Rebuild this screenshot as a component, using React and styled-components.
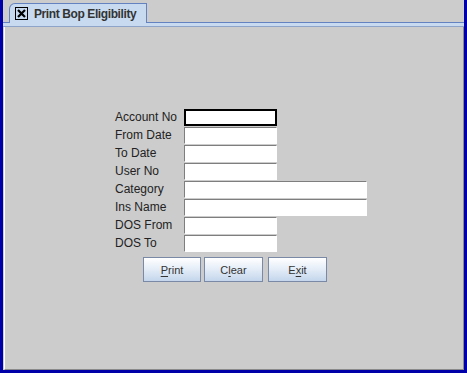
import React from 'react';
import styled, { createGlobalStyle } from 'styled-components';

const GlobalStyle = createGlobalStyle`
  html, body {
    margin: 0;
    padding: 0;
    background: #cccccc;
  }
  body {
    font-family: "Liberation Sans", Arial, sans-serif;
    font-size: 12px;
    color: #222;
  }
`;

const Frame = styled.div`
  width: 467px;
  height: 373px;
  box-sizing: border-box;
  border: 3px solid #0000a8;
  border-top: none;
  background: #cccccc;
  display: flex;
  flex-direction: column;
`;

const TabStrip = styled.div`
  display: flex;
  align-items: flex-end;
  height: 23px;
  flex-shrink: 0;
`;

const StripEdge = styled.div`
  width: ${({ w }) => (w ? `${w}px` : 'auto')};
  flex: ${({ grow }) => (grow ? 1 : 'none')};
  height: 0;
  border-bottom: 1px solid #6382bf;
`;

const Tab = styled.div`
  height: 20px;
  box-sizing: border-box;
  display: flex;
  align-items: center;
  gap: 6px;
  padding: 0 10px 0 5px;
  background: #c8daf0;
  border: 1px solid #6382bf;
  border-bottom: none;
  border-top-left-radius: 6px;
`;

const CloseBox = styled.span`
  width: 13px;
  height: 13px;
  box-sizing: border-box;
  display: inline-flex;
  align-items: center;
  justify-content: center;
  border: 1px solid #000;
`;

const TabTitle = styled.span`
  font-weight: bold;
  font-size: 12px;
  letter-spacing: -0.4px;
  color: #333;
`;

const TabBand = styled.div`
  height: 3px;
  background: #c8daf0;
  border-bottom: 1px solid #8ea4c8;
  flex-shrink: 0;
`;

const Panel = styled.div`
  flex: 1;
  border-left: 1px solid #ffffff;
  border-right: 1px solid #8a8a8a;
  border-bottom: 1px solid #8a8a8a;
  margin: 0 0 0 1px;
  padding: 82px 0 0 110px;
  display: flex;
  flex-direction: column;
`;

const Form = styled.div`
  display: grid;
  grid-template-columns: 69px auto;
  row-gap: 1px;
  justify-items: start;
`;

const Label = styled.label`
  font-size: 12px;
  line-height: 17px;
  color: #222;
  white-space: nowrap;
`;

const Field = styled.div`
  width: ${({ wide }) => (wide ? 183 : 93)}px;
  height: 17px;
  box-sizing: border-box;
  background: #fff;
  border-top: 1px solid ${({ focused }) => (focused ? '#000' : '#7e7e7e')};
  border-left: 1px solid ${({ focused }) => (focused ? '#000' : '#7e7e7e')};
  border-right: 1px solid ${({ focused }) => (focused ? '#000' : '#fff')};
  border-bottom: 1px solid ${({ focused }) => (focused ? '#000' : '#fff')};
  outline: ${({ focused }) => (focused ? '1px solid #000' : 'none')};
  outline-offset: -2px;
`;

const ButtonRow = styled.div`
  display: flex;
  margin: 5px 0 0 28px;
`;

const Button = styled.button`
  width: ${({ w }) => w}px;
  height: 25px;
  box-sizing: border-box;
  border: 1px solid #7a8aa6;
  background: linear-gradient(#ffffff 0%, #e6eef8 45%, #c4d6ec 100%);
  font-family: "Liberation Sans", Arial, sans-serif;
  font-size: 11px;
  color: #333;
  padding: 0;
  margin-left: ${({ ml }) => ml || 0}px;

  u {
    text-decoration: underline;
    text-underline-offset: 2px;
  }
`;

const fields = [
  { label: 'Account No', focused: true },
  { label: 'From Date' },
  { label: 'To Date' },
  { label: 'User No' },
  { label: 'Category', wide: true },
  { label: 'Ins Name', wide: true },
  { label: 'DOS From' },
  { label: 'DOS To' },
];

export default function App() {
  return (
    <>
      <GlobalStyle />
      <Frame>
        <TabStrip>
          <StripEdge w={6} />
          <Tab>
            <CloseBox>
              <svg width="9" height="9" viewBox="0 0 9 9">
                <path d="M1 1 L8 8 M8 1 L1 8" stroke="#000" strokeWidth="2.2" />
              </svg>
            </CloseBox>
            <TabTitle>Print Bop Eligibility</TabTitle>
          </Tab>
          <StripEdge grow />
        </TabStrip>
        <TabBand />
        <Panel>
          <Form>
            {fields.map((f) => (
              <React.Fragment key={f.label}>
                <Label>{f.label}</Label>
                <Field wide={f.wide} focused={f.focused} />
              </React.Fragment>
            ))}
          </Form>
          <ButtonRow>
            <Button w={58}><u>P</u>rint</Button>
            <Button w={59} ml={3}>C<u>l</u>ear</Button>
            <Button w={59} ml={5}>E<u>x</u>it</Button>
          </ButtonRow>
        </Panel>
      </Frame>
    </>
  );
}
